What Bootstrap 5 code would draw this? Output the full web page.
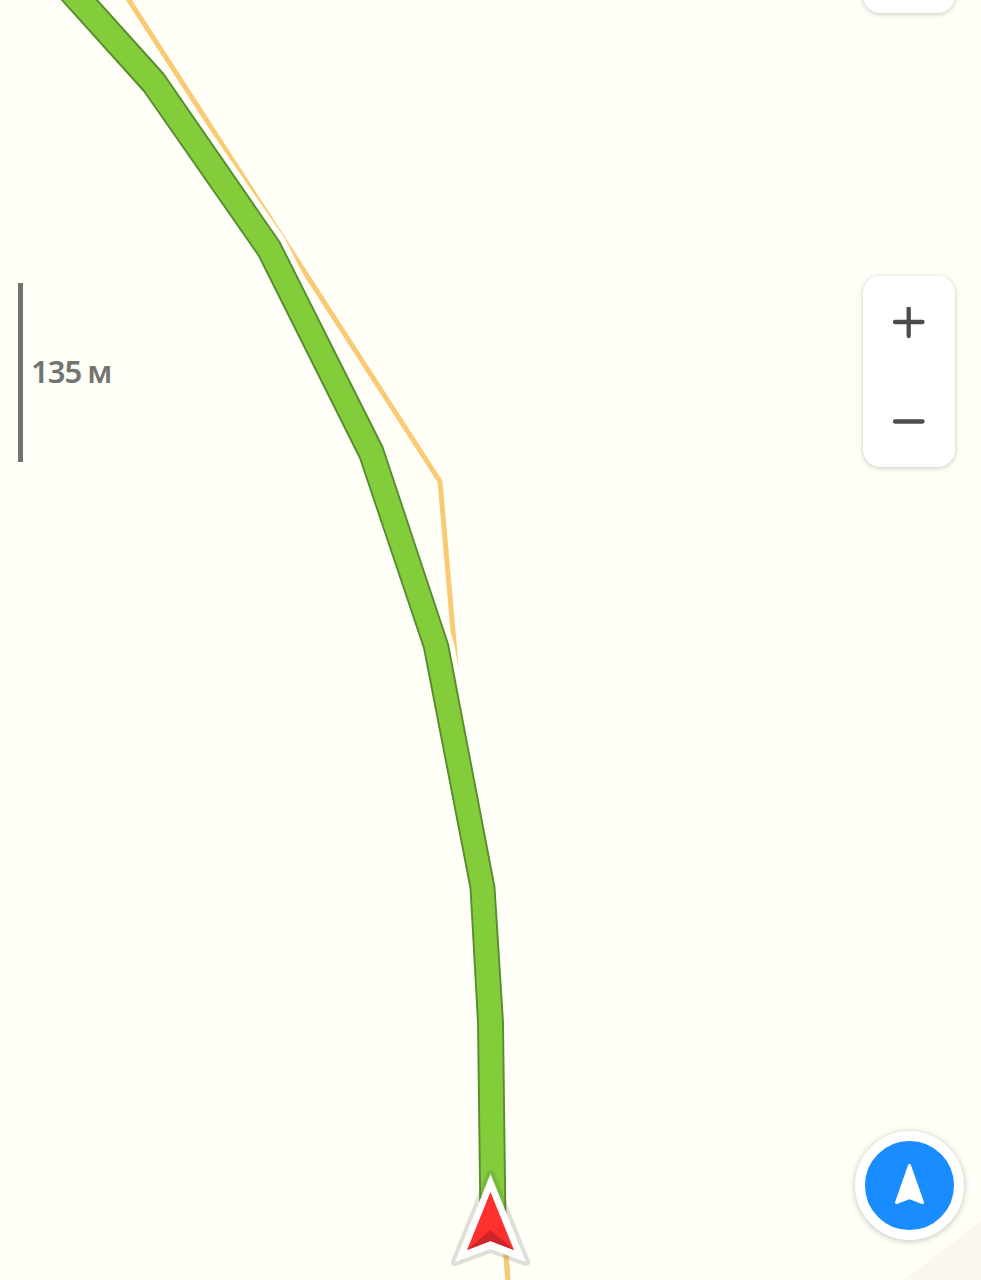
<!DOCTYPE html>
<html lang="ru">
<head>
<meta charset="utf-8">
<meta name="viewport" content="width=device-width, initial-scale=1">
<title>Карта</title>
<link rel="stylesheet" href="https://cdn.jsdelivr.net/npm/bootstrap@5.3.0/dist/css/bootstrap.min.css">
<style>
  body { background: #fffff7; font-family: "Noto Sans", "Open Sans", sans-serif; }
  .map-screen { width: 981px; height: 1280px; }
  .map-controls { padding: 0 17px 40px 0; }
  .map-panel { width: 92px; background: #fff; border-radius: 17px; margin-right: 9px; box-shadow: 0 1px 5px rgba(70,70,50,.3); border: 0; }
  .panel-top { height: 93px; margin-top: -80px; }
  .panel-zoom { height: 191px; margin-top: 263px; }
  .zoom-btn { border: 0; background: none; padding: 0; line-height: 0; }
  .locate { width: 109px; height: 109px; padding: 0; border: 10px solid #fff; border-radius: 50%; background: #198cff; box-shadow: 0 1px 6px rgba(70,70,50,.35); line-height: 0; }
  .scale-box { margin: 283px 0 0 18px; height: 179px; }
  .scale-bar { width: 5px; height: 179px; background: #72726f; }
  .scale-text { font-size: 31px; line-height: 42px; font-weight: 600; color: #737370; margin: -3px 0 0 8px; white-space: pre; letter-spacing: -1px; word-spacing: -1px; }
</style>
</head>
<body>
<main class="map-screen position-relative overflow-hidden d-flex justify-content-between align-items-start">
  <svg class="position-absolute top-0 start-0" width="981" height="1280" viewBox="0 0 981 1280" aria-hidden="true">
    <path d="M981 1221V1280H904Z" fill="#faf8ee"/>
    <!-- roads -->
    <path d="M125 -6L440 481.500L455.500 660L508 1280" fill="none" stroke="#f9ca73" stroke-width="5" stroke-linejoin="round"/>
    <!-- route with light halo -->
    <g stroke-linejoin="round">
      <path d="M53 -10L144 91L259 256L360 458L424 648L470.500 888L478 1022L480.500 1222H505.500L503 1022L494.500 887L448 644L383 447L280 242L164 74L88 -10Z" fill="#fffff7" stroke="#fffff7" stroke-width="12"/>
      <path d="M53 -10L144 91L259 256L360 458L424 648L470.500 888L478 1022L480.500 1222H505.500L503 1022L494.500 887L448 644L382.500 447L279.500 242L163.500 74L88 -10Z" fill="#83cd3b" stroke="#588c30" stroke-width="1.900"/>
    </g>
    <path d="M505.500 1245L508 1282" stroke="#f7ca78" stroke-width="5"/>
    <!-- vehicle cursor -->
    <path d="M490.500 1174L526 1262L490.500 1249L455 1262Z" fill="#5b6b50" stroke="#5b6b50" stroke-width="8" stroke-linejoin="round" opacity=".2"/>
    <path d="M490.500 1174L526 1262L490.500 1249L455 1262Z" fill="#fff"/>
    <path d="M490.500 1192L514 1250L490.500 1241L467 1250Z" fill="#ff3030"/>
    <path d="M490.500 1230L514 1250L490.500 1241L467 1250Z" fill="#ce2529"/>
  </svg>

  <div class="scale-box position-relative d-flex align-items-center">
    <div class="scale-bar"></div>
    <div class="scale-text">135 м</div>
  </div>

  <div class="map-controls position-relative h-100 d-flex flex-column align-items-end">
    <div class="map-panel panel-top flex-shrink-0"></div>
    <div class="map-panel panel-zoom flex-shrink-0 d-flex flex-column">
      <button class="zoom-btn flex-fill" aria-label="Приблизить">
        <svg width="32" height="34" viewBox="0 0 32 34"><path d="M2 15H29.500M15.700 1.500V29" stroke="#4c4c4a" stroke-width="4.300" stroke-linecap="round"/></svg>
      </button>
      <button class="zoom-btn flex-fill" aria-label="Отдалить">
        <svg width="32" height="34" viewBox="0 0 32 34"><path d="M2 19.500H29.500" stroke="#4c4c4a" stroke-width="4.300" stroke-linecap="round"/></svg>
      </button>
    </div>
    <button class="locate mt-auto flex-shrink-0" aria-label="Моё местоположение">
      <svg width="32" height="44" viewBox="0 0 32 44"><path d="M15.500 1.500L28.500 38.500L15.500 33.500L2.500 38.500Z" fill="#fff" stroke="#fff" stroke-width="3" stroke-linejoin="round"/></svg>
    </button>
  </div>
</main>
<script src="https://cdn.jsdelivr.net/npm/bootstrap@5.3.0/dist/js/bootstrap.bundle.min.js"></script>
</body>
</html>
